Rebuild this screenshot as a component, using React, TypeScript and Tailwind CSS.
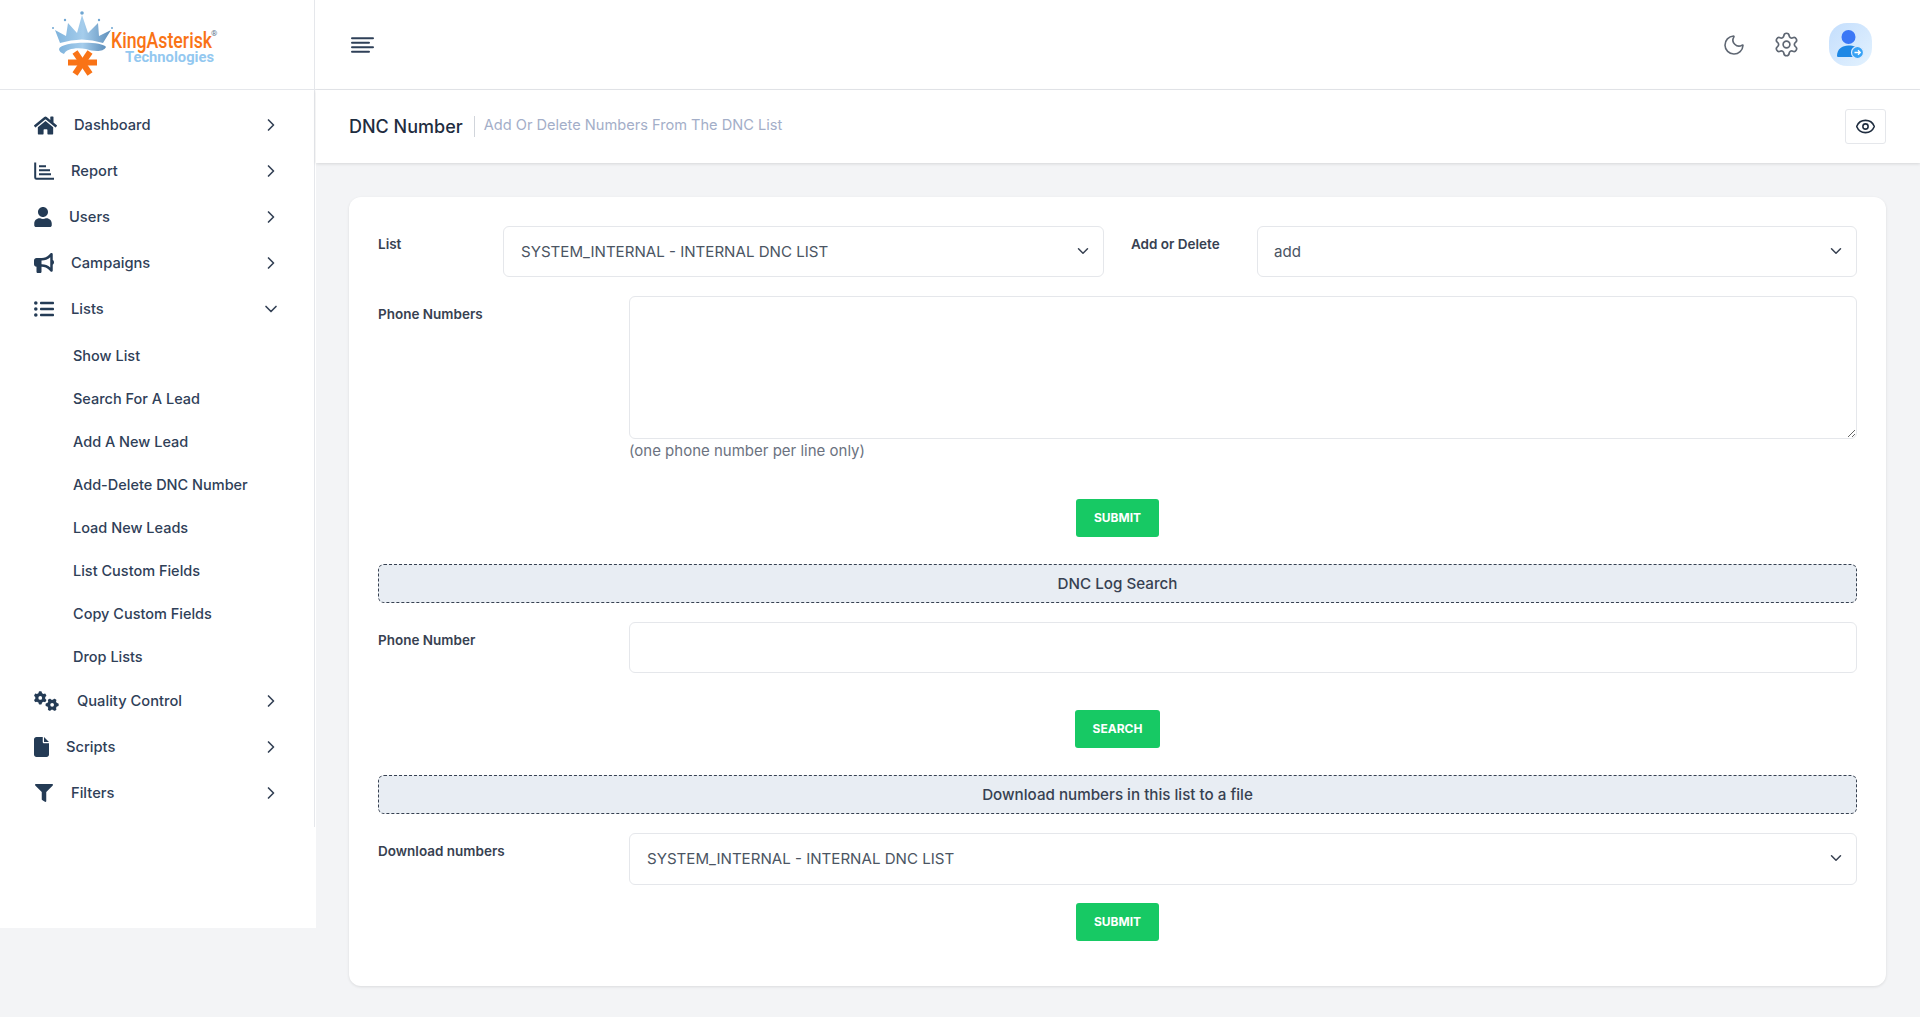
import type { ReactNode } from "react";
import { ChevronDown, ChevronRight, Eye, Moon, Settings } from "lucide-react";
import { FaFilter, FaHome, FaUser } from "react-icons/fa";
import { FaBullhorn, FaFile, FaGears } from "react-icons/fa6";

function ReportIcon() {
  return (
    <svg viewBox="0 0 20 18" className="h-[18px] w-5" fill="none" stroke="#243b55">
      <path d="M1.2 0.5V15.5Q1.2 16.8 2.5 16.8H20" strokeWidth="2" />
      <path d="M5 4.2H12M5 8.2H16M5 12.2H17" strokeWidth="2" />
    </svg>
  );
}

function ListIcon() {
  return (
    <svg viewBox="0 0 20 16" className="h-4 w-5" fill="#243b55">
      <circle cx="1.8" cy="2" r="1.8" />
      <circle cx="1.8" cy="8" r="1.8" />
      <circle cx="1.8" cy="14" r="1.8" />
      <rect x="6" y="0.7" width="14" height="2.6" rx="0.8" />
      <rect x="6" y="6.7" width="14" height="2.6" rx="0.8" />
      <rect x="6" y="12.7" width="14" height="2.6" rx="0.8" />
    </svg>
  );
}

function NavRow({ icon, boxClass, label, open }: { icon: ReactNode; boxClass: string; label: string; open?: boolean }) {
  return (
    <a className="flex h-[46px] items-center pl-[34px] pr-[33px] text-[14.7px] font-medium text-[#2f4058]">
      <span className={boxClass}>{icon}</span>
      <span className="flex-1">{label}</span>
      {open ? <ChevronDown className="h-5 w-5 text-[#334155]" /> : <ChevronRight className="h-5 w-5 text-[#334155]" />}
    </a>
  );
}

const subItems = [
  "Show List",
  "Search For A Lead",
  "Add A New Lead",
  "Add-Delete DNC Number",
  "Load New Leads",
  "List Custom Fields",
  "Copy Custom Fields",
  "Drop Lists",
];

function Logo() {
  return (
    <svg viewBox="0 0 314 89" className="h-[89px] w-[314px]">
      <defs>
        <linearGradient id="crown" x1="0" x2="1" y1="0" y2="0">
          <stop offset="0" stopColor="#7fb3dc" />
          <stop offset="0.5" stopColor="#a5cdec" />
          <stop offset="1" stopColor="#5e8fbb" />
        </linearGradient>
      </defs>
      <path d="M55 30L66 36L68 23L77 33L82 15L88 33L98 23L99 36L111 30L103 43Q82 36 60 43Z" fill="url(#crown)" />
      <path d="M59 49C61 41 103 41 106 47C103 53 92 51 86 49C76 47 66 49 64 54C61 53 59 51 59 49Z" fill="url(#crown)" />
      <circle cx="82" cy="13" r="1.8" fill="#6fa6d2" />
      <circle cx="65" cy="20" r="1.2" fill="#6fa6d2" />
      <circle cx="99" cy="20" r="1.2" fill="#6fa6d2" />
      <circle cx="53" cy="28" r="1" fill="#6fa6d2" />
      <circle cx="112" cy="28" r="1" fill="#6fa6d2" />
      <g stroke="#f97316" strokeWidth="6">
        <path d="M68 62.5H97" />
        <path d="M75 52L90 74" />
        <path d="M90 52L75 74" />
      </g>
      <text x="111" y="48" fontFamily="Roboto, sans-serif" fontSize="22.5" fontWeight="500" fill="#f97316" textLength="101" lengthAdjust="spacingAndGlyphs">
        KingAsterisk
      </text>
      <text x="125" y="62" fontFamily="Roboto, sans-serif" fontSize="15" fontWeight="700" fill="#93c8f0" textLength="89" lengthAdjust="spacingAndGlyphs">
        Technologies
      </text>
      <text x="211" y="36" fontFamily="Roboto, sans-serif" fontSize="8" fill="#64748b">
        ®
      </text>
    </svg>
  );
}

function HamburgerIcon() {
  return (
    <svg viewBox="0 0 23 16" className="h-4 w-[23px]" stroke="#2f4058" strokeWidth="2" strokeLinecap="round">
      <path d="M1 1.2H22M1 5.8H18M1 10.2H22M1 14.8H18" />
    </svg>
  );
}

function AvatarIcon() {
  return (
    <svg viewBox="0 0 43 43" className="h-[43px] w-[43px]">
      <circle cx="19.5" cy="14" r="7" fill="#3b77f6" />
      <path d="M8 33C8 26 13 22.5 19.5 22.5C25 22.5 29 24.5 30 28V34H10C8.6 34 8 33.7 8 33Z" fill="#1e88e5" />
      <circle cx="28.5" cy="29.5" r="6" fill="#38a3f5" stroke="#dbeafe" strokeWidth="1.2" />
      <path d="M25.5 29.5H31M29 27.3L31.3 29.5L29 31.7" stroke="#fff" strokeWidth="1.3" fill="none" />
    </svg>
  );
}

function Field({ children, className }: { children: ReactNode; className: string }) {
  return (
    <div className={"relative " + className}>
      {children}
      <ChevronDown className="pointer-events-none absolute right-[12px] top-[16px] h-[18px] w-[18px] text-[#374151]" />
    </div>
  );
}

const selectClass =
  "h-full w-full appearance-none rounded-md border border-[#e5e7eb] bg-white text-[15.1px] text-[#4b5563] outline-none";
const labelClass = "pt-[8px] text-[13.5px] font-semibold leading-5 text-[#374151]";
const buttonClass = "h-[38px] rounded-[3px] bg-[#17c964] text-[12px] font-bold uppercase text-white";
const barClass =
  "flex h-[39px] items-center justify-center rounded-md border border-dashed border-[#374151] bg-[#e8edf3] pt-[2px] text-[15.2px] font-medium text-[#374151]";

export default function App() {
  return (
    <div className="flex h-[1017px] overflow-hidden bg-[#f3f4f6] font-[Inter,sans-serif]">
      <aside className="h-[928px] w-[316px] shrink-0 bg-white">
        <div className="h-[90px] w-full border-b border-[#e5e7eb]">
          <div className="h-[89px] w-[315px] border-r border-[#e5e7eb]">
            <Logo />
          </div>
        </div>
        <nav className="h-[737px] w-[315px] border-r border-[#e5e7eb] pt-3">
          <NavRow icon={<FaHome className="h-[21px] w-[23px] text-[#243b55]" />} boxClass="w-10" label="Dashboard" />
          <NavRow icon={<ReportIcon />} boxClass="w-[37px]" label="Report" />
          <NavRow icon={<FaUser className="h-[20px] w-[18px] text-[#243b55]" />} boxClass="w-[35px]" label="Users" />
          <NavRow icon={<FaBullhorn className="h-[20px] w-[20px] text-[#243b55]" />} boxClass="w-[37px]" label="Campaigns" />
          <NavRow icon={<ListIcon />} boxClass="w-[37px]" label="Lists" open />
          <div className="pt-[2px]">
            {subItems.map((item) => (
              <a key={item} className="flex h-[43px] items-center pl-[73px] text-[14.5px] font-medium text-[#2f4058]">
                {item}
              </a>
            ))}
          </div>
          <NavRow icon={<FaGears className="h-[20px] w-[25px] text-[#243b55]" />} boxClass="w-[43px]" label="Quality Control" />
          <NavRow icon={<FaFile className="h-[20px] w-[15px] text-[#243b55]" />} boxClass="w-[32px]" label="Scripts" />
          <NavRow icon={<FaFilter className="h-[18px] w-[20px] text-[#243b55]" />} boxClass="w-[37px]" label="Filters" />
        </nav>
      </aside>

      <main className="min-w-0 flex-1">
        <header className="flex h-[90px] items-center justify-between border-b border-[#e5e7eb] bg-white pl-[35px] pr-[48px]">
          <HamburgerIcon />
          <div className="flex items-center">
            <Moon className="h-[24px] w-[24px] text-[#5f6773]" strokeWidth={1.6} />
            <Settings className="ml-[27px] h-[27px] w-[27px] text-[#5f6773]" strokeWidth={1.5} />
            <div className="ml-[29px] h-[43px] w-[43px] rounded-[18px] bg-gradient-to-br from-[#c4defd] to-[#e3f2fe]">
              <AvatarIcon />
            </div>
          </div>
        </header>

        <div className="flex h-[73px] items-center bg-white pl-[33px] pr-[34px] shadow-[0_1px_3px_rgba(0,0,0,0.12)]">
          <h1 className="text-[18px] font-medium text-[#1f2d3f]">DNC Number</h1>
          <span className="ml-[11px] h-[21px] w-px bg-[#d1d5db]" />
          <p className="mb-px ml-[9px] flex-1 text-[14.6px] text-[#a3aec8]">Add Or Delete Numbers From The DNC List</p>
          <button className="flex h-[35px] w-[41px] items-center justify-center rounded-[3px] border border-[#e5e7eb] bg-white">
            <Eye className="h-[21px] w-[21px] text-[#1f2d3f]" strokeWidth={1.8} />
          </button>
        </div>

        <section className="ml-[33px] mr-[34px] mt-[34px] h-[789px] rounded-xl bg-white px-[29px] pt-[29px] shadow-[0_1px_3px_rgba(0,0,0,0.1)]">
          <div className="flex h-[51px]">
            <label className={labelClass + " w-[125px]"}>List</label>
            <Field className="w-[601px]">
              <select className={selectClass + " pl-[17px] pt-[2px]"}>
                <option>SYSTEM_INTERNAL - INTERNAL DNC LIST</option>
              </select>
            </Field>
            <label className={labelClass + " ml-[27px] w-[126px]"}>Add or Delete</label>
            <Field className="flex-1">
              <select className={selectClass + " pl-4 pt-[2px]"}>
                <option>add</option>
              </select>
            </Field>
          </div>

          <div className="mt-[19px] flex">
            <label className={labelClass + " w-[251px]"}>Phone Numbers</label>
            <div className="flex-1">
              <textarea className="block h-[143px] w-full rounded-md border border-[#e5e7eb] bg-white outline-none" />
              <p className="mt-[2px] text-[15px] leading-5 text-[#6b7280]">(one phone number per line only)</p>
            </div>
          </div>

          <div className="mt-[38px] flex justify-center">
            <button className={buttonClass + " w-[83px]"}>Submit</button>
          </div>

          <div className={barClass + " mt-[27px]"}>DNC Log Search</div>

          <div className="mt-[19px] flex h-[51px]">
            <label className={labelClass + " w-[251px]"}>Phone Number</label>
            <input className="h-full flex-1 rounded-md border border-[#e5e7eb] bg-white outline-none" />
          </div>

          <div className="mt-[37px] flex justify-center">
            <button className={buttonClass + " w-[85px]"}>Search</button>
          </div>

          <div className={barClass + " mt-[27px]"}>Download numbers in this list to a file</div>

          <div className="mt-[19px] flex h-[52px]">
            <label className={labelClass + " w-[251px]"}>Download numbers</label>
            <Field className="flex-1">
              <select className={selectClass + " pl-[17px]"}>
                <option>SYSTEM_INTERNAL - INTERNAL DNC LIST</option>
              </select>
            </Field>
          </div>

          <div className="mt-[18px] flex justify-center">
            <button className={buttonClass + " w-[83px]"}>Submit</button>
          </div>
        </section>
      </main>
    </div>
  );
}
